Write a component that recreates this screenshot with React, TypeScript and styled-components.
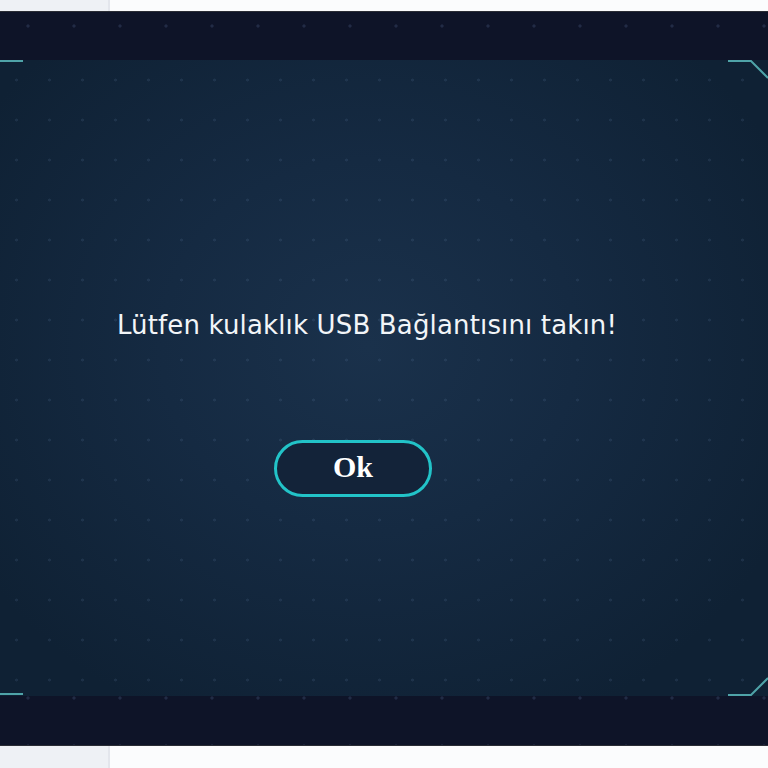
import React from "react";
import styled, { createGlobalStyle } from "styled-components";

const Global = createGlobalStyle`
  html, body { margin: 0; padding: 0; background: #f4f6f9; }
  body { width: 768px; height: 768px; overflow: hidden; font-family: "DejaVu Sans", sans-serif; }
`;

const Page = styled.div`
  width: 768px;
  height: 768px;
  display: flex;
  flex-direction: column;
`;

const Strip = styled.div<{ $h: number; $bottom?: boolean }>`
  height: ${(p) => p.$h}px;
  display: flex;
  background: #f4f6f9;
  ${(p) => (p.$bottom ? "border-top: 1px solid #2a2d35;" : "border-bottom: 1px solid #2a2d35;")}
`;

const StripLeft = styled.div`
  width: 108px;
  background: #eef1f5;
  border-right: 2px solid #e3e6ec;
`;

const StripRight = styled.div`
  flex: 1;
  background: #fbfcfd;
`;

const Dialog = styled.div`
  height: 734px;
  display: flex;
  flex-direction: column;
  background-color: #0e1428;
  background-image: radial-gradient(circle, rgba(90, 110, 150, 0.26) 1.3px, transparent 1.9px);
  background-size: 46px 48px;
  background-position: 5px -10px;
`;

const Band = styled.div<{ $h: number }>`
  height: ${(p) => p.$h}px;
  flex: none;
`;

const Body = styled.div`
  position: relative;
  flex: 1;
  display: flex;
  flex-direction: column;
  align-items: center;
  background:
    radial-gradient(circle, rgba(110, 140, 180, 0.14) 1.2px, transparent 1.8px) 0 0 / 33px 40px,
    radial-gradient(ellipse 60% 65% at 48% 45%, #1a314b 0%, #152a42 45%, #0f2134 100%);
`;

const Corner = styled.svg<{ $pos: "tl" | "tr" | "bl" | "br" }>`
  position: absolute;
  width: 44px;
  height: 24px;
  ${(p) => (p.$pos[0] === "t" ? "top: -2px;" : "bottom: -2px;")}
  ${(p) => (p.$pos[1] === "l" ? "left: 0;" : "right: 0;")}
`;

const Message = styled.div`
  margin-top: 248px;
  padding-right: 34px;
  color: #f2f5f8;
  font-family: "DejaVu Sans", Verdana, sans-serif;
  font-size: 26px;
  letter-spacing: 0.15px;
  line-height: 34px;
  white-space: nowrap;
`;

const OkButton = styled.button`
  margin-top: 98px;
  margin-right: 62px;
  width: 158px;
  height: 57px;
  border-radius: 29px;
  border: 3px solid #22c3c8;
  background: #132339;
  color: #ffffff;
  font-family: "Liberation Serif", serif;
  font-weight: bold;
  font-size: 30px;
  line-height: 1;
  padding: 0 0 2px 0;
  cursor: pointer;
`;

function Bracket({ pos }: { pos: "tl" | "tr" | "bl" | "br" }) {
  const stroke = "#4fa3a8";
  if (pos === "tl") {
    return (
      <Corner $pos={pos} viewBox="0 0 44 24">
        <line x1="0" y1="3" x2="23" y2="3" stroke={stroke} strokeWidth="2" />
      </Corner>
    );
  }
  if (pos === "bl") {
    return (
      <Corner $pos={pos} viewBox="0 0 44 24">
        <line x1="0" y1="20" x2="23" y2="20" stroke={stroke} strokeWidth="2" />
      </Corner>
    );
  }
  if (pos === "tr") {
    return (
      <Corner $pos={pos} viewBox="0 0 44 24">
        <polyline points="4,3 27,3 44,20" fill="none" stroke={stroke} strokeWidth="2" />
      </Corner>
    );
  }
  return (
    <Corner $pos={pos} viewBox="0 0 44 24">
      <polyline points="4,21 27,21 44,4" fill="none" stroke={stroke} strokeWidth="2" />
    </Corner>
  );
}

export default function App() {
  return (
    <Page>
      <Global />
      <Strip $h={11}>
        <StripLeft />
        <StripRight />
      </Strip>
      <Dialog>
        <Band $h={48} />
        <Body>
          <Bracket pos="tl" />
          <Bracket pos="tr" />
          <Bracket pos="bl" />
          <Bracket pos="br" />
          <Message>Lütfen kulaklık USB Bağlantısını takın!</Message>
          <OkButton>Ok</OkButton>
        </Body>
        <Band $h={49} />
      </Dialog>
      <Strip $h={22} $bottom>
        <StripLeft />
        <StripRight />
      </Strip>
    </Page>
  );
}
